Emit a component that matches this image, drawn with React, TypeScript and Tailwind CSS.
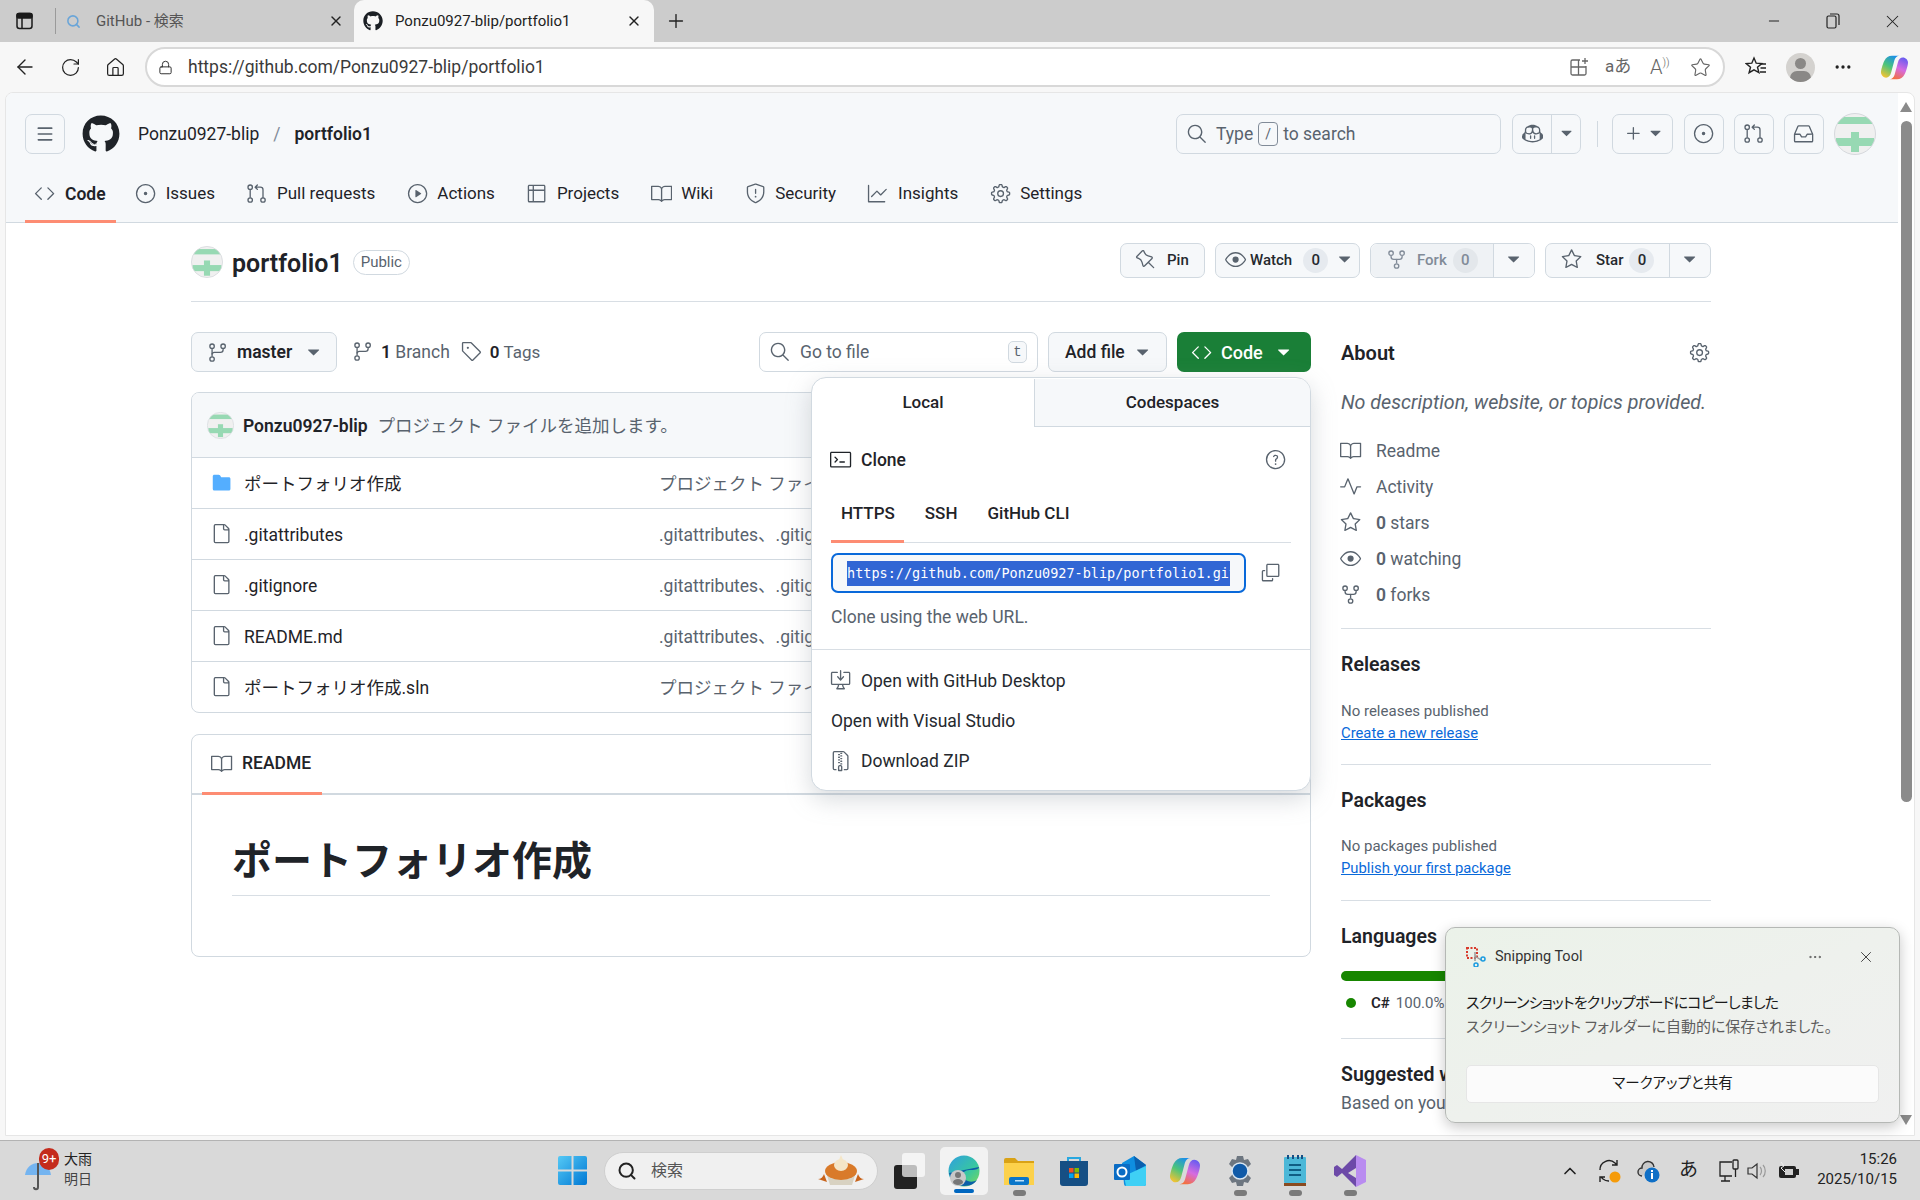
import React from "react";
import * as G from "react-icons/go";
import { FaGithub } from "react-icons/fa";
import { ArrowLeft, RotateCw, Home, Lock, Search, X, Plus, Minus, Star, ChevronUp, MoreHorizontal, Menu } from "lucide-react";

// react-icons draws these octicons on a 24 box: the glyph is enlarged a little so it fills the box it is laid out in.
const O = (I: any) => ({ size = 20, className = "" }: { size?: number; className?: string }) => (
  <span className={`inline-flex items-center justify-center shrink-0 ${className}`} style={{ width: size, height: size }}>
    <I size={size * 1.06} className="shrink-0" />
  </span>
);
const GoCode = O(G.GoCode), GoIssueOpened = O(G.GoIssueOpened), GoGitPullRequest = O(G.GoGitPullRequest), GoPlay = O(G.GoPlay),
  GoTable = O(G.GoTable), GoBook = O(G.GoBook), GoShield = O(G.GoShield), GoGraph = O(G.GoGraph), GoGear = O(G.GoGear),
  GoRepoForked = O(G.GoRepoForked), GoStar = O(G.GoStar), GoEye = O(G.GoEye), GoPin = O(G.GoPin), GoSearch = O(G.GoSearch),
  GoTag = O(G.GoTag), GoGitBranch = O(G.GoGitBranch), GoFile = O(G.GoFile), GoFileDirectoryFill = O(G.GoFileDirectoryFill),
  GoPlus = O(G.GoPlus), GoInbox = O(G.GoInbox), GoCopilot = O(G.GoCopilot), GoTerminal = O(G.GoTerminal), GoQuestion = O(G.GoQuestion),
  GoCopy = O(G.GoCopy), GoDesktopDownload = O(G.GoDesktopDownload), GoFileZip = O(G.GoFileZip), GoPulse = O(G.GoPulse),
  GoTriangleDown = O(G.GoTriangleDown);

const Avatar = ({ s }: { s: number }) => (
  <svg width={s} height={s} viewBox="0 0 42 42" className="shrink-0">
    <defs>
      <clipPath id={`av${s}`}><circle cx="21" cy="21" r="20.5" /></clipPath>
    </defs>
    <g clipPath={`url(#av${s})`}>
      <rect width="42" height="42" fill="#f0f0f0" />
      <rect y="4" width="42" height="7" fill="#97d9b3" />
      <rect x="17" y="19" width="8" height="20" fill="#97d9b3" />
      <rect x="2" y="25" width="38" height="8" fill="#97d9b3" />
    </g>
    <circle cx="21" cy="21" r="20.5" fill="none" stroke="#d5d8dc" />
  </svg>
);

const Caret = ({ c = "text-[#59636e]" }: { c?: string }) => <GoTriangleDown size={20} className={c} />;

const IconBtn = ({ children }: { children: React.ReactNode }) => (
  <div className="w-[40px] h-[40px] rounded-[7px] border border-[#d1d9e0] flex items-center justify-center text-[#59636e]">{children}</div>
);

const tabs: [any, string][] = [
  [GoCode, "Code"], [GoIssueOpened, "Issues"], [GoGitPullRequest, "Pull requests"], [GoPlay, "Actions"],
  [GoTable, "Projects"], [GoBook, "Wiki"], [GoShield, "Security"], [GoGraph, "Insights"], [GoGear, "Settings"],
];

const rows: [boolean, string, string][] = [
  [true, "ポートフォリオ作成", "プロジェクト ファイルを追加します。"],
  [false, ".gitattributes", ".gitattributes、.gitignore を追加します。"],
  [false, ".gitignore", ".gitattributes、.gitignore を追加します。"],
  [false, "README.md", ".gitattributes、.gitignore を追加します。"],
  [false, "ポートフォリオ作成.sln", "プロジェクト ファイルを追加します。"],
];

const Divider = ({ mt }: { mt: string }) => <div className={`h-px bg-[#d8dee4] ${mt}`} />;

const H2 = ({ children, mt = "" }: { children: React.ReactNode; mt?: string }) => (
  <div className={`h-[30px] flex items-center text-[19.5px] font-semibold text-[#1f2328] ${mt}`}>{children}</div>
);

const stats: [any, React.ReactNode][] = [
  [GoBook, "Readme"], [GoPulse, "Activity"],
  [GoStar, <><b className="font-semibold">0</b> stars</>],
  [GoEye, <><b className="font-semibold">0</b> watching</>],
  [GoRepoForked, <><b className="font-semibold">0</b> forks</>],
];

const Dot = () => <div className="w-[13px] h-[6px] rounded-full bg-[#7a7a7a] mx-auto" />;

const TaskIcon = ({ w, dot, children }: { w: string; dot?: boolean; children: React.ReactNode }) => (
  <div className={`${w} h-[60px] relative flex items-center justify-center`}>
    {children}
    {dot && <div className="absolute bottom-[5px] left-0 right-0"><Dot /></div>}
  </div>
);

const CopilotLogo = ({ s }: { s: number }) => (
  <svg width={s} height={s} viewBox="0 0 32 32">
    <defs>
      <linearGradient id="cp1" x1="0.7" y1="0" x2="0.2" y2="1"><stop offset="0" stopColor="#1b8fe8" /><stop offset=".5" stopColor="#4cc47a" /><stop offset="1" stopColor="#f7c331" /></linearGradient>
      <linearGradient id="cp2" x1="0.7" y1="0" x2="0.3" y2="1"><stop offset="0" stopColor="#6a5cf0" /><stop offset=".5" stopColor="#d66be0" /><stop offset="1" stopColor="#f4703a" /></linearGradient>
    </defs>
    <path d="M13 2h9c-3 0-5 2-6 5l-4 15c-1 4-3 6-6 6-3 0-6-3-6-6 0-3 2-10 4-14 2-4 5-6 9-6z" fill="url(#cp1)" />
    <path d="M19 30h-9c3 0 5-2 6-5l4-15c1-4 3-6 6-6 3 0 6 3 6 6 0 3-2 10-4 14-2 4-5 6-9 6z" fill="url(#cp2)" />
  </svg>
);

export default function App() {
  return (
    <div
      className="relative w-[1920px] h-[1200px] overflow-hidden flex flex-col bg-[#f7f7f7] text-[17.5px] text-[#1f2328]"
      style={{ fontFamily: '"Roboto","Noto Sans CJK JP",sans-serif' }}
    >
      {/* tab strip */}
      <div className="h-[42px] bg-[#cccccc] flex items-center shrink-0 text-[15px]">
        <svg width="20" height="20" viewBox="0 0 20 20" className="ml-[15px]" fill="none" stroke="#1a1a1a" strokeWidth="1.5"><rect x="2" y="2.5" width="15" height="15" rx="2.5" /><rect x="2" y="2.5" width="15" height="4.5" rx="1.5" fill="#1a1a1a" /><path d="M7 7v10" /></svg>
        <div className="w-px h-[26px] bg-[#9a9a9a] ml-[20px]" />
        <div className="w-[298px] h-full flex items-center pl-[10px] text-[#555] shrink-0">
          <Search size={15} className="text-[#6aa5d8]" strokeWidth={2.5} />
          <span className="ml-[15px]">GitHub - 検索</span>
          <X size={16} className="ml-auto mr-[10px] text-[#222]" />
        </div>
        <div className="w-[300px] h-full bg-[#f7f7f7] rounded-t-[10px] flex items-center pl-[9px] shrink-0">
          <FaGithub size={20} className="text-[#1b1f24]" />
          <span className="ml-[12px] text-[#222]">Ponzu0927-blip/portfolio1</span>
          <X size={16} className="ml-auto mr-[12px] text-[#222]" />
        </div>
        <Plus size={22} strokeWidth={1.5} className="ml-[11px] text-[#222]" />
        <div className="ml-auto flex items-center">
          <Minus size={16} className="text-[#222] mr-[44px]" strokeWidth={1.5} />
          <svg width="14" height="16" viewBox="0 0 14 16" fill="none" stroke="#222" strokeWidth="1.2" className="mr-[42px]"><rect x="1" y="3" width="9" height="12" rx="1.5" /><path d="M4 1h7a2 2 0 012 2v9" /></svg>
          <X size={21} strokeWidth={1.2} className="text-[#222] mr-[17px]" />
        </div>
      </div>

      {/* toolbar */}
      <div className="h-[50px] shrink-0 flex items-center bg-[#f7f7f7]">
        <ArrowLeft size={24} strokeWidth={1.4} className="ml-[13px] text-[#222]" />
        <RotateCw size={21} strokeWidth={1.4} className="ml-[23px] text-[#222]" />
        <Home size={21} strokeWidth={1.4} className="ml-[24px] text-[#222]" />
        <div className="ml-[19px] w-[1580px] h-[40px] rounded-full bg-white border-2 border-[#d8d8d8] flex items-center shrink-0">
          <Lock size={15} strokeWidth={1.6} className="ml-[11px] text-[#333]" />
          <span className="ml-[15px] text-[17.5px] text-[#3a3a3a]">https://github.com/Ponzu0927-blip/portfolio1</span>
          <div className="ml-auto flex items-center text-[#666]">
            <svg width="20" height="20" viewBox="0 0 20 20" fill="none" stroke="#666" strokeWidth="1.3" className="mr-[-3px]"><path d="M11 3H3.500A1.500 1.500 0 002 4.500V16.500A1.500 1.500 0 003.500 18h12a1.500 1.500 0 001.500-1.500V9M2 10h15M9.500 3v15M16 1v6M13 4h6" /></svg>
            <span className="ml-[19px] text-[17px] w-[26px] text-center whitespace-nowrap">aあ</span>
            <span className="ml-[19px] w-[22px] text-[20px] leading-none whitespace-nowrap font-light">A<span className="text-[11px] align-super">))</span></span>
            <Star size={21} strokeWidth={1.3} className="ml-[18px] mr-[12px]" />
          </div>
        </div>
        <svg width="22" height="22" viewBox="0 0 22 22" fill="none" stroke="#222" strokeWidth="1.4" className="ml-[20px]"><path d="M9 2l2.200 5.200 5.600.4-4.300 3.600 1.400 5.400L9 13.800 4.100 16.700l1.400-5.400L1.200 7.600l5.600-.4z" /><path d="M15 8h6M15.500 12h5.500M15 16h6" /></svg>
        <div className="ml-[19px] w-[29px] h-[29px] rounded-full bg-[#d4d2cf] overflow-hidden relative shrink-0">
          <div className="absolute left-[9px] top-[5px] w-[11px] h-[11px] rounded-full bg-[#8a8886]" />
          <div className="absolute left-[4px] top-[18px] w-[21px] h-[14px] rounded-full bg-[#8a8886]" />
        </div>
        <MoreHorizontal size={20} className="ml-[18px] text-[#222]" />
        <div className="ml-[28px]"><CopilotLogo s={27} /></div>
      </div>

      {/* page */}
      <div className="flex-1 min-h-0 ml-[5px] mr-[5px] mb-[4px] bg-white rounded-t-[8px] border border-[#e6e6e6] flex overflow-hidden">
        <div className="w-[1892px] shrink-0 min-w-0 overflow-hidden">
          {/* github header */}
          <div className="h-[130px] bg-[#f6f8fa] border-b border-[#d1d9e0] pt-[21px] px-[19px]">
            <div className="h-[40px] flex items-center">
              <IconBtn><Menu size={20} /></IconBtn>
              <FaGithub size={38} className="ml-[17px] text-[#1f2328]" />
              <span className="ml-[18px] text-[#1f2328]">Ponzu0927-blip</span>
              <span className="ml-[14px] text-[#818b98]">/</span>
              <span className="ml-[14px] font-semibold text-[#1f2328]">portfolio1</span>
              <div className="ml-[804px] w-[325px] h-[40px] rounded-[7px] border border-[#d1d9e0] flex items-center pl-[10px] text-[#59636e] shrink-0">
                <GoSearch size={20} />
                <span className="ml-[9px]">Type</span>
                <span className="mx-[5px] w-[20px] h-[24px] border border-[#818b98] rounded-[4px] text-center text-[14px] leading-[22px]">/</span>
                <span>to search</span>
              </div>
              <div className="ml-[11px] w-[69px] h-[40px] rounded-[7px] border border-[#d1d9e0] flex items-center text-[#59636e] shrink-0">
                <div className="w-[39px] flex justify-center"><GoCopilot size={20} /></div>
                <div className="w-[29px] h-full border-l border-[#d1d9e0] flex items-center justify-center"><GoTriangleDown size={18} /></div>
              </div>
              <div className="ml-[16px] w-px h-[26px] bg-[#d1d9e0]" />
              <div className="ml-[14px] w-[61px] h-[40px] rounded-[7px] border border-[#d1d9e0] flex items-center pl-[11px] text-[#59636e] shrink-0">
                <GoPlus size={20} /><GoTriangleDown size={18} className="ml-[3px]" />
              </div>
              <div className="ml-[11px]"><IconBtn><GoIssueOpened size={20} /></IconBtn></div>
              <div className="ml-[10px]"><IconBtn><GoGitPullRequest size={20} /></IconBtn></div>
              <div className="ml-[10px]"><IconBtn><GoInbox size={20} /></IconBtn></div>
              <div className="ml-[10px]"><Avatar s={42} /></div>
            </div>
            <div className="mt-[13px] h-[56px] flex gap-[12px] text-[17px]">
              {tabs.map(([I, t], i) => (
                <div key={t} className={`px-[10px] gap-[10px] flex items-center border-b-[3px] pt-[1px] ${i === 0 ? "border-[#fd8c73] font-semibold text-[17.5px] mr-[-2px]" : "border-transparent"}`}>
                  <I size={20} className="text-[#59636e]" /><span>{t}</span>
                </div>
              ))}
            </div>
          </div>

          <div className="ml-[185px] w-[1520px]">
            {/* repo head */}
            <div className="h-[79px] border-b border-[#d8dee4] flex items-center">
              <Avatar s={32} />
              <span className="ml-[9px] mt-[3px] text-[25px] font-semibold text-[#1f2328]">portfolio1</span>
              <span className="ml-[10px] mt-[1px] h-[25px] px-[7px] border border-[#d1d9e0] rounded-full text-[15px] text-[#59636e] leading-[23px]">Public</span>
              <div className="ml-auto h-[35px] mb-[4px] flex gap-[10px] text-[15px] font-medium text-[#25292e]">
                <div className="w-[85px] h-full rounded-[7px] border border-[#d1d9e0] bg-[#f6f8fa] flex items-center pl-[15px]"><GoPin size={20} className="text-[#59636e]" /><span className="ml-[11px]">Pin</span></div>
                <div className="w-[145px] h-full rounded-[7px] border border-[#d1d9e0] bg-[#f6f8fa] flex items-center pl-[10px]">
                  <GoEye size={20} className="text-[#59636e]" /><span className="ml-[4px]">Watch</span>
                  <span className="ml-[11px] w-[25px] h-[25px] rounded-full bg-[#e6eaef] text-center leading-[25px]">0</span>
                  <Caret c="ml-[6px] text-[#59636e]" />
                </div>
                <div className="w-[165px] h-full rounded-[7px] border border-[#d1d9e0] flex">
                  <div className="w-[123px] bg-[#eff2f5] rounded-l-[7px] flex items-center pl-[16px] text-[#818b98] border-r border-[#d1d9e0]">
                    <GoRepoForked size={20} /><span className="ml-[10px]">Fork</span>
                    <span className="ml-[6px] w-[25px] h-[25px] rounded-full bg-[#e3e7eb] text-center leading-[25px]">0</span>
                  </div>
                  <div className="flex-1 bg-[#f6f8fa] rounded-r-[7px] flex items-center justify-center"><Caret /></div>
                </div>
                <div className="w-[166px] h-full rounded-[7px] border border-[#d1d9e0] bg-[#f6f8fa] flex">
                  <div className="w-[124px] flex items-center pl-[16px] border-r border-[#d1d9e0]">
                    <GoStar size={20} className="text-[#59636e]" /><span className="ml-[14px]">Star</span>
                    <span className="ml-[6px] w-[25px] h-[25px] rounded-full bg-[#e6eaef] text-center leading-[25px]">0</span>
                  </div>
                  <div className="flex-1 flex items-center justify-center"><Caret /></div>
                </div>
              </div>
            </div>

            <div className="grid grid-cols-[1120px_370px] gap-[30px] pt-[30px]">
              <div>
                {/* toolbar */}
                <div className="h-[40px] flex items-center">
                  <div className="w-[146px] h-full rounded-[7px] border border-[#d1d9e0] bg-[#f6f8fa] flex items-center pl-[16px] pt-[1px] font-semibold">
                    <GoGitBranch size={20} className="text-[#59636e]" /><span className="ml-[9px]">master</span><Caret c="ml-[11px] text-[#59636e]" />
                  </div>
                  <GoGitBranch size={20} className="ml-[16px] text-[#59636e]" />
                  <span className="ml-[8px] pt-[1px] text-[#59636e]"><b className="font-semibold text-[#1f2328]">1</b> Branch</span>
                  <GoTag size={20} className="ml-[12px] text-[#59636e]" />
                  <span className="ml-[8px] pt-[1px] text-[17px] text-[#59636e]"><b className="font-semibold text-[#1f2328]">0</b> Tags</span>
                  <div className="ml-auto w-[279px] h-full rounded-[7px] border border-[#d1d9e0] flex items-center pl-[10px] text-[#59636e]">
                    <GoSearch size={20} /><span className="ml-[10px] pt-[1px]">Go to file</span>
                    <span className="ml-auto mr-[10px] w-[19px] h-[22px] rounded-[5px] border border-[#d1d9e0] bg-[#f6f8fa] text-center text-[14px] leading-[20px]" style={{ fontFamily: '"Liberation Mono",monospace' }}>t</span>
                  </div>
                  <div className="ml-[10px] w-[119px] h-full rounded-[7px] border border-[#d1d9e0] bg-[#f6f8fa] flex items-center pl-[16px] pt-[1px] font-medium">
                    <span>Add file</span><Caret c="ml-[8px] text-[#59636e]" />
                  </div>
                  <div className="ml-[10px] w-[134px] h-full rounded-[7px] bg-[#1a7f37] text-white flex items-center pl-[15px] pt-[1px] font-medium text-[18px]">
                    <GoCode size={20} /><span className="ml-[9px]">Code</span><GoTriangleDown size={20} className="ml-[11px]" />
                  </div>
                </div>

                {/* file table */}
                <div className="mt-[20px] border border-[#d1d9e0] rounded-[8px] overflow-hidden">
                  <div className="h-[65px] bg-[#f6f8fa] flex items-center pl-[15px] border-b border-[#d1d9e0]">
                    <Avatar s={27} />
                    <span className="ml-[9px] pt-[2px] font-semibold">Ponzu0927-blip</span>
                    <span className="ml-[10px] pt-[2px] text-[#59636e] whitespace-nowrap">プロジェクト ファイルを追加します。</span>
                  </div>
                  {rows.map(([dir, n, m], i) => (
                    <div key={n} className={`flex items-center pl-[20px] ${i < 4 ? "h-[51px] border-b border-[#d1d9e0]" : "h-[50px]"}`}>
                      {dir ? <GoFileDirectoryFill size={20} className="text-[#54aeff]" /> : <GoFile size={20} className="text-[#59636e]" />}
                      <span className="ml-[12px] pt-[2px] w-[415px] whitespace-nowrap">{n}</span>
                      <span className="pt-[2px] text-[#59636e] whitespace-nowrap">{m}</span>
                    </div>
                  ))}
                </div>

                {/* readme */}
                <div className="mt-[21px] h-[223px] border border-[#d1d9e0] rounded-[8px]">
                  <div className="h-[60px] border-b-2 border-[#d1d9e0] pl-[10px] flex">
                    <div className="w-[120px] h-[60px] border-b-[3px] border-[#fd8c73] flex items-center pl-[10px] font-medium">
                      <GoBook size={20} className="text-[#59636e]" /><span className="ml-[10px]">README</span>
                    </div>
                  </div>
                  <div className="mx-[40px] mt-[30px] h-[71px] border-b border-[#d8dee4] text-[40px] font-bold leading-[74px] whitespace-nowrap">ポートフォリオ作成</div>
                </div>
              </div>

              {/* sidebar */}
              <div className="text-[#59636e]">
                <div className="h-[42px] flex items-center justify-between">
                  <span className="text-[20px] font-semibold text-[#1f2328]">About</span>
                  <GoGear size={20} className="mb-[1px] mr-[1px]" />
                </div>
                <div className="mt-[14px] h-[30px] text-[19.7px] italic whitespace-nowrap leading-[30px]">No description, website, or topics provided.</div>
                <div className="mt-[15px]">
                  {stats.map(([I, t], i) => (
                    <div key={i} className="h-[36px] flex items-center"><I size={20} /><span className="ml-[15px]">{t}</span></div>
                  ))}
                </div>
                <Divider mt="mt-[15px]" />
                <H2 mt="mt-[21px]">Releases</H2>
                <div className="mt-[20px] h-[22px] text-[15px] leading-[22px]">No releases published</div>
                <div className="h-[22px] text-[14.8px] leading-[22px] text-[#0969da] underline">Create a new release</div>
                <Divider mt="mt-[20px]" />
                <H2 mt="mt-[21px]">Packages</H2>
                <div className="mt-[19px] h-[22px] text-[15px] leading-[22px]">No packages published</div>
                <div className="h-[22px] text-[14.8px] leading-[22px] text-[#0969da] underline">Publish your first package</div>
                <Divider mt="mt-[21px]" />
                <H2 mt="mt-[21px]">Languages</H2>
                <div className="mt-[19px] h-[10px] rounded-full bg-[#178600]" />
                <div className="mt-[11px] h-[22px] flex items-center text-[15px]">
                  <span className="ml-[5px] w-[10px] h-[10px] rounded-full bg-[#178600]" />
                  <span className="ml-[15px] font-semibold text-[#1f2328]">C#</span>
                  <span className="ml-[6px]">100.0%</span>
                </div>
                <Divider mt="mt-[24px]" />
                <H2 mt="mt-[21px]">Suggested workflows</H2>
                <div className="mt-[2px] h-[22px] leading-[22px] whitespace-nowrap">Based on your tech stack</div>
              </div>
            </div>
          </div>
        </div>

        {/* scrollbar */}
        <div className="flex-1 flex flex-col items-center pt-[9px]">
          <div className="w-0 h-0 border-x-[6px] border-x-transparent border-b-[10px] border-b-[#8b8b8b]" />
          <div className="mt-[9px] w-[11px] h-[681px] rounded-full bg-[#8b8b8b]" />
          <div className="mt-auto mb-[10px] w-0 h-0 border-x-[6px] border-x-transparent border-t-[10px] border-t-[#8b8b8b]" />
        </div>
      </div>

      {/* taskbar */}
      <div className="h-[60px] shrink-0 bg-[#d9d9d9] border-t border-[#b3b3b3] flex items-center relative">
        <div className="ml-[25px] w-[26px] h-full relative">
          <svg width="26" height="30" viewBox="0 0 26 30" className="absolute top-[20px] left-0">
            <path d="M0 14C1 6 7 2 13 2s12 4 13 12z" fill="#74b4f0" />
            <path d="M13 2v24c0 3-4 3-4 0" fill="none" stroke="#555" strokeWidth="2" />
          </svg>
          <div className="absolute left-[14px] top-[7px] w-[20px] h-[22px] rounded-full bg-[#c42b1c] text-white text-[13px] leading-[21px] text-center whitespace-nowrap">9+</div>
        </div>
        <div className="ml-[13px] mb-[4px] text-[14px] leading-[20px] text-[#222]"><div>大雨</div><div className="text-[#444]">明日</div></div>

        <svg width="29" height="29" viewBox="0 0 29 29" className="ml-[466px] shrink-0">
          <defs><linearGradient id="win" x1="0" y1="0" x2="1" y2="1"><stop offset="0" stopColor="#55c9f5" /><stop offset="1" stopColor="#0078d4" /></linearGradient></defs>
          <path d="M0 2a2 2 0 012-2h11.500v13.500H0zM15.500 0H27a2 2 0 012 2v11.500H15.500zM0 15.500h13.500V29H2a2 2 0 01-2-2zM15.500 15.500H29V27a2 2 0 01-2 2H15.500z" fill="url(#win)" />
        </svg>
        <div className="ml-[17px] w-[274px] h-[38px] rounded-full bg-[#f0f0f0] border border-[#cfcfcf] flex items-center pl-[12px] shrink-0">
          <Search size={20} strokeWidth={2.4} className="text-[#222]" />
          <span className="ml-[14px] text-[16px] text-[#555]">検索</span>
          <svg width="52" height="32" viewBox="0 0 52 32" className="ml-auto mr-[10px]">
            <path d="M3 24c3 0 5-2 6-5l3 8zM49 24c-3 0-5-2-6-5l-3 8z" fill="#c8641c" />
            <path d="M11 17h30l-4 13H15z" fill="#d8d2c2" />
            <ellipse cx="26" cy="16" rx="16" ry="9" fill="#d97a2a" />
            <ellipse cx="26" cy="10" rx="7" ry="6" fill="#f4e6c8" />
            <path d="M26 0l3 7h-6z" fill="#f4e6c8" />
          </svg>
        </div>
        <div className="ml-[16px] w-[24px] h-[36px] relative shrink-0">
          <div className="absolute left-0 bottom-0 w-[23px] h-[24px] rounded-[3px] bg-[#222]" />
          <div className="absolute left-[8px] top-0 w-[23px] h-[24px] rounded-[3px] bg-white/70" />
        </div>
        <div className="ml-[22px] w-[48px] h-[48px] rounded-[5px] bg-[#f2f2f2] flex items-center justify-center relative shrink-0">
          <svg width="32" height="32" viewBox="0 0 32 32">
            <defs>
              <linearGradient id="edge" x1="0" y1="0" x2="1" y2="1"><stop offset="0" stopColor="#2f9fe0" /><stop offset=".6" stopColor="#38c7a0" /><stop offset="1" stopColor="#7ed957" /></linearGradient>
            </defs>
            <circle cx="16" cy="16" r="15.500" fill="url(#edge)" />
            <path d="M1 18c2 9 9 13 15 13 7 0 11-3 13-6-5 3-12 2-14-4-1-5 4-6 8-6 5 0 8-1 8-3" fill="#0c5fa8" />
            <circle cx="10" cy="23" r="8" fill="#c9c9c9" />
            <circle cx="10" cy="20" r="3" fill="#777" /><ellipse cx="10" cy="27" rx="5" ry="3" fill="#777" />
          </svg>
          <div className="absolute bottom-[2px] left-[14px] w-[20px] h-[4px] rounded-full bg-[#0067c0]" />
        </div>

        <TaskIcon w="w-[30px] ml-[16px]" dot>
          <svg width="30" height="28" viewBox="0 0 30 28">
            <path d="M0 3a2 2 0 012-2h9l3 3h16v6H0z" fill="#d9a216" />
            <rect y="6" width="30" height="22" fill="#fcd14b" />
            <rect x="5" y="20" width="20" height="8" rx="2" fill="#0b76c9" />
            <rect x="11" y="23" width="9" height="1.500" fill="#bfe0f7" />
          </svg>
        </TaskIcon>
        <TaskIcon w="w-[30px] ml-[25px]">
          <svg width="30" height="30" viewBox="0 0 30 30">
            <path d="M9 7V2h12v5" fill="none" stroke="#29a8e0" strokeWidth="2" />
            <path d="M1 5h28v22a3 3 0 01-3 3H4a3 3 0 01-3-3z" fill="#164f84" />
            <rect x="10" y="12" width="4.500" height="4.500" fill="#f25022" /><rect x="15.500" y="12" width="4.500" height="4.500" fill="#7fba00" />
            <rect x="10" y="17.500" width="4.500" height="4.500" fill="#00a4ef" /><rect x="15.500" y="17.500" width="4.500" height="4.500" fill="#ffb900" />
          </svg>
        </TaskIcon>
        <TaskIcon w="w-[32px] ml-[25px]">
          <svg width="32" height="30" viewBox="0 0 32 30">
            <path d="M8 7l12-7 12 9v19a2 2 0 01-2 2H12a2 2 0 01-2-2z" fill="#0f8ee0" />
            <path d="M20 0l12 9-10 6z" fill="#0a5fae" />
            <path d="M10 20l22-10v18a2 2 0 01-2 2H12z" fill="#3fd0f5" />
            <rect y="8" width="16" height="16" rx="1" fill="#0a6cc4" />
            <circle cx="8" cy="16" r="4.500" fill="none" stroke="#fff" strokeWidth="2" />
          </svg>
        </TaskIcon>
        <TaskIcon w="w-[30px] ml-[24px]"><CopilotLogo s={30} /></TaskIcon>
        <TaskIcon w="w-[30px] ml-[25px]" dot>
          <svg width="30" height="30" viewBox="0 0 30 30">
            <path d="M12 0h6l1 4 4-1 3 5-3 3v8l3 3-3 5-4-1-1 4h-6l-1-4-4 1-3-5 3-3v-8l-3-3 3-5 4 1z" fill="#6d7680" />
            <circle cx="15" cy="15" r="8" fill="#0f5aa8" stroke="#d9e6f2" strokeWidth="1.500" />
          </svg>
        </TaskIcon>
        <TaskIcon w="w-[22px] ml-[29px]" dot>
          <svg width="22" height="32" viewBox="0 0 22 32">
            <rect y="2" width="22" height="26" rx="1" fill="#4cb8d8" />
            <rect y="28" width="22" height="3" fill="#8a4b20" />
            <path d="M4 0v4M9 0v4M14 0v4M18 0v4" stroke="#164f84" strokeWidth="2" />
            <path d="M5 10h12M5 15h12M5 20h12" stroke="#0f5e84" strokeWidth="2" />
          </svg>
        </TaskIcon>
        <TaskIcon w="w-[32px] ml-[28px]" dot>
          <svg width="32" height="32" viewBox="0 0 32 32">
            <path d="M22 0l10 5v22l-10 5z" fill="#b98cf0" />
            <path d="M22 0L8 14l-5-4-3 2v8l3 2 5-4 14 14v-9l-8-5 8-5z" fill="#6d4aa8" />
          </svg>
        </TaskIcon>

        {/* tray */}
        <ChevronUp size={20} strokeWidth={2} className="ml-[194px] text-[#222]" />
        <svg width="26" height="26" viewBox="0 0 26 26" className="ml-[17px]" fill="none" stroke="#222" strokeWidth="1.400">
          <path d="M3 12a9 9 0 0115-7l2 2M20 2v5h-5M4 19l2 2a9 9 0 006 2M3 24v-5h5" /><circle cx="18" cy="19" r="5.500" fill="#f59b0a" stroke="none" />
        </svg>
        <svg width="24" height="24" viewBox="0 0 24 24" className="ml-[14px]">
          <path d="M5 17a4 4 0 010-8 6 6 0 0112-1" fill="#c9c9c9" stroke="#333" strokeWidth="1.400" />
          <circle cx="15" cy="16" r="7.500" fill="#0f6fc6" />
          <rect x="14" y="14" width="2" height="6" fill="#fff" /><rect x="14" y="11" width="2" height="2" fill="#fff" />
        </svg>
        <span className="ml-[18px] text-[19px] text-[#222] w-[21px]">あ</span>
        <svg width="22" height="24" viewBox="0 0 22 24" className="ml-[18px]" fill="none" stroke="#222" strokeWidth="1.300">
          <path d="M14 3H2v14h12M7 17v5M3 22h9" /><rect x="15" y="1" width="5" height="9" rx="1" /><path d="M17.500 10v8" />
        </svg>
        <svg width="24" height="22" viewBox="0 0 24 22" className="ml-[6px]" fill="none" stroke="#333" strokeWidth="1.200">
          <path d="M2 8h4l5-4v14l-5-4H2z" /><path d="M14 7c2 2 2 6 0 8M17 5c3 3 3 9 0 12" stroke="#999" />
        </svg>
        <svg width="24" height="20" viewBox="0 0 24 20" className="ml-[6px]">
          <rect x="3" y="5" width="17" height="12" rx="2" fill="#222" /><rect x="20" y="8" width="3" height="6" fill="#222" /><path d="M5 1l3 4-3 2 4 4" stroke="#eee" strokeWidth="1" fill="none" /><rect x="9" y="8" width="8" height="6" fill="#d0d0d0" />
        </svg>
        <div className="absolute right-[23px] top-[8px] text-right text-[15px] leading-[20px] text-[#222]"><div>15:26</div><div>2025/10/15</div></div>
      </div>

      {/* clone popover */}
      <div className="absolute left-[811px] top-[377px] w-[500px] h-[414px] bg-white rounded-[15px] border border-[#d1d9e0] shadow-[0_8px_24px_rgba(140,149,159,0.35)] overflow-hidden">
        <div className="h-[49px] flex font-medium pt-[1px] text-[17px]">
          <div className="w-[223px] flex items-center justify-center border-r border-[#d1d9e0]">Local</div>
          <div className="flex-1 bg-[#f6f8fa] border-b border-[#d1d9e0] flex items-center justify-center">Codespaces</div>
        </div>
        <div className="px-[19px]">
          <div className="mt-[18px] h-[30px] flex items-center font-semibold">
            <GoTerminal size={20} /><span className="ml-[10px] font-medium">Clone</span>
            <GoQuestion size={20} className="ml-auto mr-[5px] text-[#59636e]" />
          </div>
          <div className="mt-[19px] h-[49px] border-b border-[#d8dee4] flex items-center gap-[30px] pl-[10px] relative font-medium pb-[9px] text-[17px]">
            <span>HTTPS</span><span>SSH</span><span>GitHub CLI</span>
            <div className="absolute left-0 bottom-[-1px] w-[73px] h-[3px] bg-[#fd8c73]" />
          </div>
          <div className="mt-[10px] flex items-center">
            <div className="w-[415px] h-[40px] rounded-[7px] border-2 border-[#0969da] bg-[#f6f8fa] pl-[14px] flex items-center overflow-hidden">
              <div className="w-[383px] h-[25px] bg-[#3166d4] text-white text-[13.5px] leading-[25px] overflow-hidden whitespace-nowrap" style={{ fontFamily: '"DejaVu Sans Mono",monospace' }}>https://github.com/Ponzu0927-blip/portfolio1.git</div>
            </div>
            <GoCopy size={20} className="ml-[15px] text-[#59636e]" />
          </div>
          <div className="mt-[10px] h-[28px] leading-[28px] text-[#59636e]">Clone using the web URL.</div>
        </div>
        <div className="mt-[18px] h-px bg-[#d8dee4]" />
        <div className="px-[19px] text-[#25292e]">
          <div className="mt-[11px] h-[40px] flex items-center"><GoDesktopDownload size={20} className="text-[#59636e]" /><span className="ml-[10px]">Open with GitHub Desktop</span></div>
          <div className="h-[40px] flex items-center">Open with Visual Studio</div>
          <div className="h-[40px] flex items-center"><GoFileZip size={20} className="text-[#59636e]" /><span className="ml-[10px]">Download ZIP</span></div>
        </div>
      </div>

      {/* toast */}
      <div className="absolute left-[1445px] top-[927px] w-[455px] h-[196px] rounded-[10px] border border-[#b5b8b5] bg-gradient-to-br from-[#ebf2e9] via-[#eef1ed] to-[#f0f0f0] shadow-[0_4px_14px_rgba(0,0,0,0.22)] px-[20px]">
        <div className="h-[58px] flex items-center text-[14.5px] text-[#333]">
          <svg width="20" height="20" viewBox="0 0 20 20">
            <rect x="1" y="1" width="10" height="10" fill="none" stroke="#d8392b" strokeWidth="2" strokeDasharray="2 1.500" />
            <path d="M9 5v9M9 9l6 4" stroke="#9a9a9a" strokeWidth="1.500" /><circle cx="17" cy="12" r="2" fill="none" stroke="#1a9be0" strokeWidth="1.500" /><circle cx="10" cy="18" r="2" fill="none" stroke="#1a9be0" strokeWidth="1.500" />
          </svg>
          <span className="ml-[9px]">Snipping Tool</span>
          <MoreHorizontal size={16} strokeWidth={1.4} className="ml-auto text-[#555]" />
          <X size={18} strokeWidth={1.200} className="ml-[34px] mr-[4px] text-[#333]" />
        </div>
        <div className="mt-[5px] text-[15px] leading-[24px] whitespace-nowrap [font-feature-settings:'palt']">
          <div className="text-[#1a1a1a] tracking-[-0.8px]">スクリーンショットをクリップボードにコピーしました</div>
          <div className="text-[#5e5e5e]">スクリーンショット フォルダーに自動的に保存されました。</div>
        </div>
        <div className="mt-[26px] h-[38px] rounded-[5px] bg-[#fbfbfb] border border-[#e6e6e6] flex items-center justify-center text-[14.5px] [font-feature-settings:'palt'] text-[#1a1a1a]">マークアップと共有</div>
      </div>
    </div>
  );
}
